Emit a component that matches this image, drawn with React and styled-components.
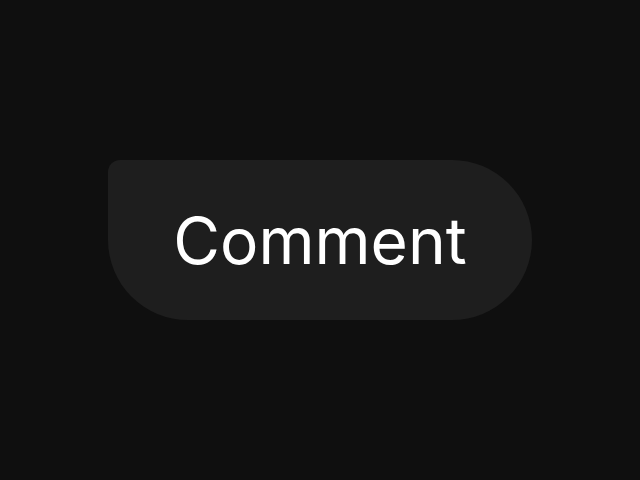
import styled, { createGlobalStyle } from 'styled-components'

const Global = createGlobalStyle`
  html, body { margin: 0; padding: 0; background: #0f0f0f; }
`

const Page = styled.div`
  width: 640px;
  height: 480px;
  display: flex;
  align-items: center;
  justify-content: center;
`

const Button = styled.button`
  width: 424px;
  height: 160px;
  border: none;
  border-radius: 12px 80px 80px 80px;
  background: #1e1e1e;
  color: #ffffff;
  font-family: Inter, "Noto Sans", sans-serif;
  font-size: 64px;
  font-weight: 400;
  display: flex;
  align-items: center;
  justify-content: center;
  cursor: pointer;
  padding: 0;
`

export default function App() {
  return (
    <Page>
      <Global />
      <Button>Comment</Button>
    </Page>
  )
}
